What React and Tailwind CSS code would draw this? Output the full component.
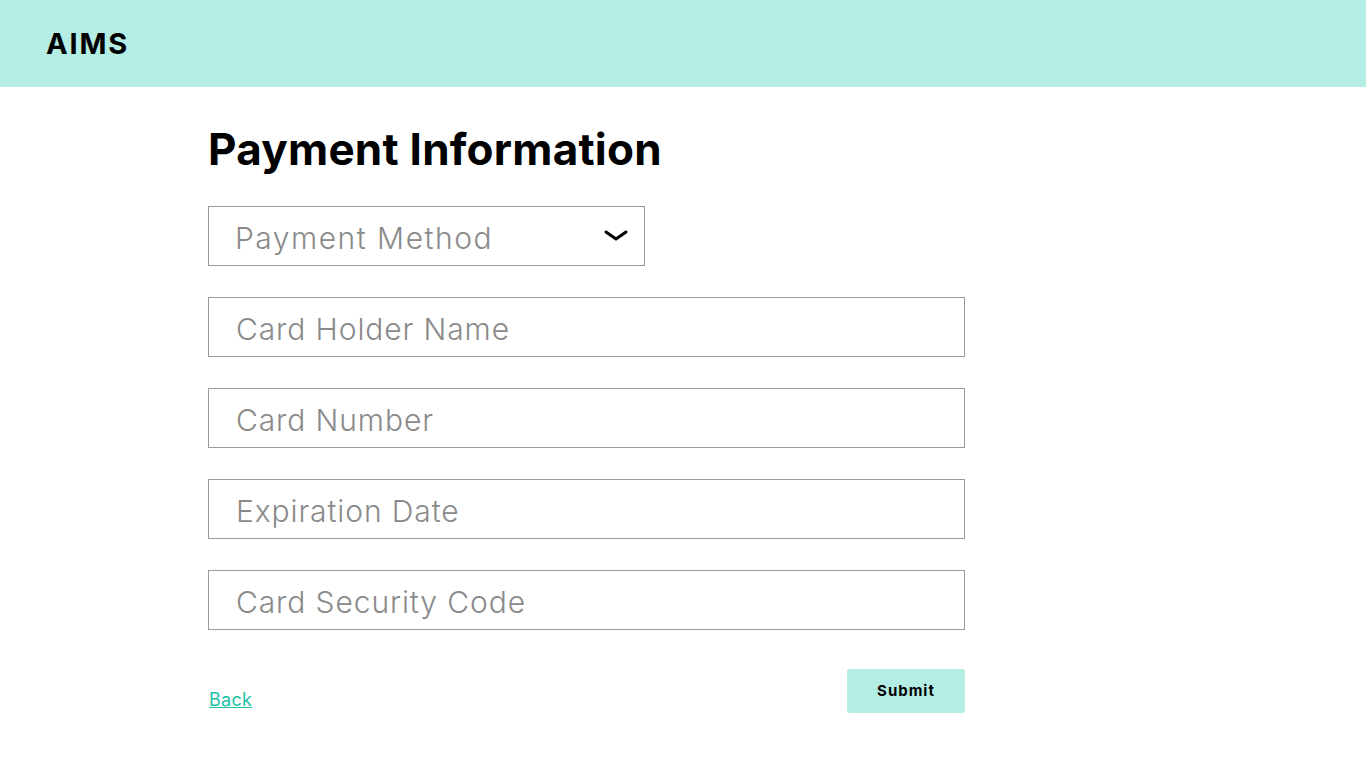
import React from "react";

const fields = [
  "Card Holder Name",
  "Card Number",
  "Expiration Date",
  "Card Security Code",
];

const App = () => {
  return (
    <div className="min-h-screen bg-white font-['Inter',sans-serif] text-black">
      <div className="h-[87px] bg-[#b3ede4] flex items-center pl-[46px]">
        <div className="text-[29px] font-bold tracking-[1.8px]">AIMS</div>
      </div>
      <div className="pl-[208px] w-[965px] box-content">
        <h1 className="mt-[34px] text-[44px] font-bold leading-[56px] tracking-[0.25px]">
          Payment Information
        </h1>
        <div className="mt-[29px] w-[437px] h-[60px] border border-[#9a9a9a] flex items-center justify-between pl-[26px] pr-[16px]">
          <span className="pt-[5px] text-[30px] font-light text-[#8a8a8a] tracking-[1.5px]">
            Payment Method
          </span>
          <svg width="24" height="14" viewBox="0 0 24 14">
            <path
              d="M2 3 L12 10 L22 3"
              fill="none"
              stroke="#000"
              strokeWidth="3"
              strokeLinecap="round"
              strokeLinejoin="round"
            />
          </svg>
        </div>
        <div className="mt-[31px] flex flex-col gap-[31px]">
          {fields.map((f, i) => (
            <div
              key={i}
              className="w-[757px] h-[60px] border border-[#9a9a9a] flex items-center pl-[27px]"
            >
              <span className="pt-[5px] text-[30px] font-light text-[#8a8a8a] tracking-[0.9px]">
                {f}
              </span>
            </div>
          ))}
        </div>
        <div className="mt-[39px] w-[757px] flex justify-between items-start">
          <a
            href="#"
            className="mt-[17px] ml-[1px] text-[18px] text-[#1fbfa5] underline tracking-[0.3px]"
          >
            Back
          </a>
          <button className="w-[118px] h-[44px] rounded-[3px] bg-[#b3ede4] text-[15px] font-bold text-black tracking-[1px]">
            Submit
          </button>
        </div>
      </div>
    </div>
  );
};

export default App;
